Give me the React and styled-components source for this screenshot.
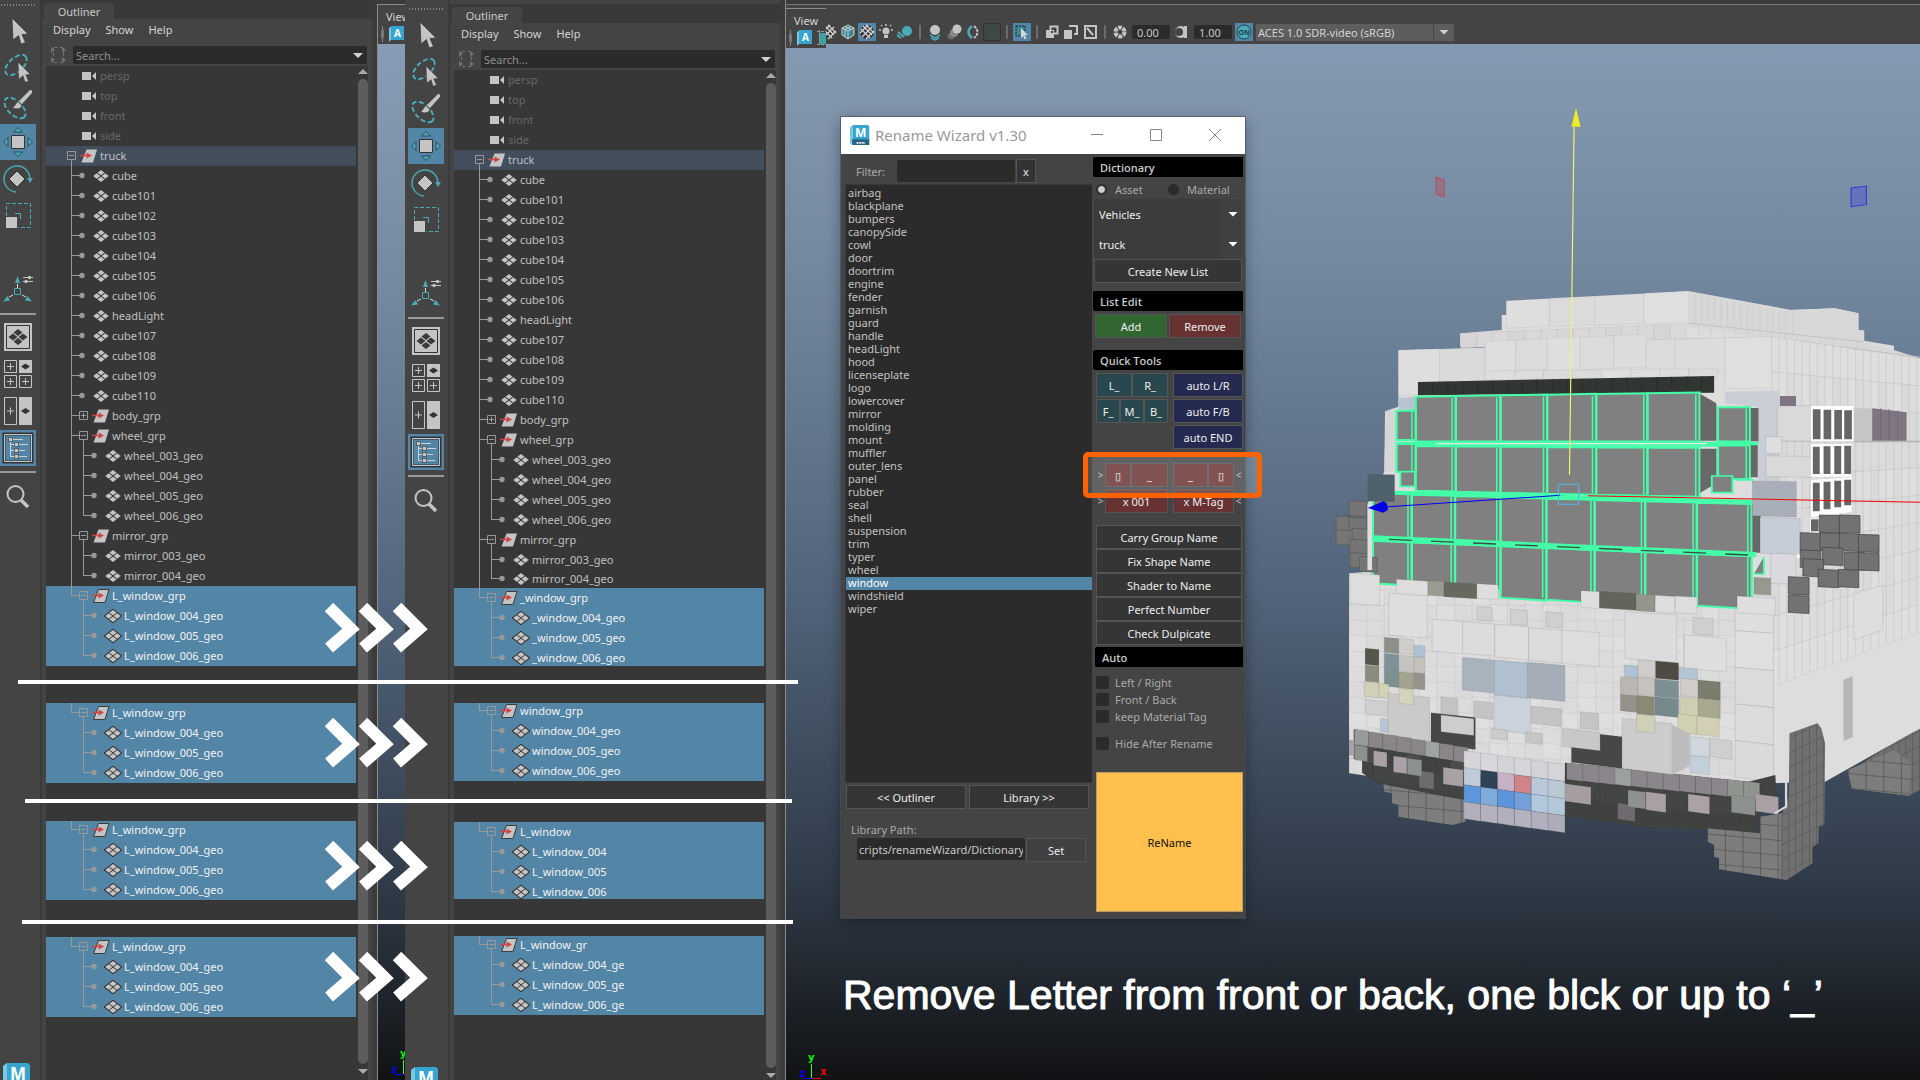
import React from "react";
import styled, { createGlobalStyle, css } from "styled-components";

const c = {
  panel: "#444444",
  dark: "#373737",
  well: "#2b2b2b",
  line: "#999999",
  select: "#5285a6",
  teal: "#49aab8",
  icon: "#c4c4c4",
  text: "#c8c8c8",
};

const Global = createGlobalStyle`
  * { box-sizing: border-box; }
  html, body { margin: 0; background: #111; }
  body, button, input, select { font-family: "Noto Sans", "Open Sans", sans-serif; font-size: 11px; }
  button, input, select { margin: 0; padding: 0; border: 0; border-radius: 0; }
  ul { list-style: none; margin: 0; padding: 0; }
`;

const Page = styled.div`
  position: relative;
  display: flex;
  height: 100vh;
  overflow: hidden;
  color: ${c.text};
  background: #3a3a3a;
`;

/* ---------- Maya shell ---------- */

const Shell = styled.div`
  flex: none;
  display: flex;
  overflow: hidden;
  width: ${(p) => p.$width}px;
  padding-left: ${(p) => p.$inset}px;
  background: ${c.panel};
`;

const ToolColumn = styled.nav`
  flex: none;
  display: flex;
  flex-direction: column;
  gap: 1px;
  width: 40px;
  padding-top: ${(p) => p.$top}px;
  background: ${c.panel};
`;

const Grip = styled.div`
  flex: none;
  width: 36px;
  height: 5px;
  margin: 3px 0 4px;
  background: radial-gradient(circle, #888 1px, transparent 1px) 0 0 / 3px 4px;
`;

const ToolButton = styled.button`
  flex: none;
  width: 36px;
  height: 36px;
  margin-top: ${(p) => p.$gap || 0}px;
  background: ${(p) => (p.$on ? c.select : "transparent")};
  svg { display: block; }
`;

const Rule = styled.div`
  flex: none;
  width: 36px;
  height: 2px;
  margin: 4px 0 3px;
  background: ${c.line};
`;

const Brand = styled.div`
  margin-top: auto;
  height: ${(p) => p.$height}px;
  padding-left: 3px;
  overflow: hidden;
`;

const OutlinerPanel = styled.section`
  flex: none;
  display: flex;
  flex-direction: column;
  width: 337px;
  padding-top: ${(p) => p.$top}px;
  border-left: 2px solid #3a3a3a;
  border-right: 5px solid #3b3b3b;
  background: ${c.panel};
`;

const TabStrip = styled.div`
  flex: none;
  height: 19px;
  padding: 3px 0 0 2px;
  background: #393939;
`;

const Tab = styled.button`
  display: block;
  width: 70px;
  height: 16px;
  color: ${c.text};
  line-height: 17px;
  border-radius: 2px 2px 0 0;
  background: ${c.panel};
`;

const MenuBar = styled.div`
  flex: none;
  display: flex;
  gap: 15px;
  height: 27px;
  padding: 3px 0 0 11px;
  button { height: 16px; color: #d4d4d4; line-height: 16px; background: none; }
`;

const SearchRow = styled.label`
  flex: none;
  display: flex;
  align-items: center;
  gap: 7px;
  height: 18px;
  margin: 0 5px 2px 9px;
`;

const SearchBox = styled.div`
  flex: 1;
  display: flex;
  align-items: center;
  height: 18px;
  padding: 1px 4px 0 3px;
  border-radius: 2px;
  background: ${c.well};
  input {
    flex: 1;
    min-width: 0;
    color: #999;
    background: transparent;
    &::placeholder { color: #8f8f8f; }
  }
`;

const Triangle = styled.span`
  flex: none;
  width: 10px;
  height: 5px;
  background: ${(p) => p.$tone || "#d0d0d0"};
  clip-path: ${(p) => (p.$up ? "polygon(50% 0, 100% 100%, 0 100%)" : "polygon(0 0, 100% 0, 50% 100%)")};
  pointer-events: none;
`;

const TreeArea = styled.div`
  flex: 1;
  display: flex;
  min-height: 0;
  margin: 0 4px 0 4px;
  background: ${c.dark};
`;

const Tree = styled.div`
  flex: 1;
  min-width: 0;
  overflow: hidden;
`;

const Scroll = styled.div`
  flex: none;
  display: flex;
  flex-direction: column;
  align-items: center;
  gap: 5px;
  width: 10px;
  margin-left: 2px;
  padding: 3px 0 ${(p) => p.$bottom}px;
`;

const Thumb = styled.div`
  flex: 1;
  width: 10px;
  border-radius: 5px;
  background: #5d5d5d;
`;

const Block = styled.div`
  height: ${(p) => p.$height}px;
  margin-top: ${(p) => p.$gap}px;
  overflow: hidden;
  display: flex;
  flex-direction: column;
  justify-content: ${(p) => (p.$trimTop ? "flex-end" : "flex-start")};
`;

const Row = styled.div`
  flex: none;
  display: flex;
  align-items: center;
  height: ${(p) => (p.$short ? 18 : 20)}px;
  color: ${(p) => (p.$picked ? "#f2f2f2" : p.$dim ? "#686868" : "#c0c0c0")};
  background: ${(p) => (p.$picked ? c.select : p.$tint ? "#424e5c" : "transparent")};
  svg { flex: none; display: block; }
  span { margin-left: 3px; line-height: 20px; white-space: nowrap; }
`;

/* ---------- tree data ---------- */

const mesh = (name, level = 1, extra = {}) => ({ name, level, kind: "mesh", ...extra });
const group = (name, level = 1, extra = {}) => ({ name, level, kind: "group", open: true, ...extra });

const mainRows = [
  ...["persp", "top", "front", "side"].map((name) => ({ name, level: 0, kind: "camera", dim: true })),
  group("truck", 0, { tint: true }),
  ...["cube", "cube101", "cube102", "cube103", "cube104", "cube105", "cube106", "headLight", "cube107", "cube108", "cube109", "cube110"].map((n) => mesh(n)),
  group("body_grp", 1, { open: false }),
  group("wheel_grp"),
  mesh("wheel_003_geo", 2),
  mesh("wheel_004_geo", 2),
  mesh("wheel_005_geo", 2),
  mesh("wheel_006_geo", 2, { last: true }),
  group("mirror_grp"),
  mesh("mirror_003_geo", 2),
  mesh("mirror_004_geo", 2, { last: true }),
];

const windowRows = (head, tails) => [
  group(head, 1, { last: true, picked: true }),
  ...tails.map((n, i) => mesh(n, 2, { picked: true, last: i === 2, rootEnded: true })),
];

const before = windowRows("L_window_grp", ["L_window_004_geo", "L_window_005_geo", "L_window_006_geo"]);

const leftBlocks = [
  { rows: before, height: 80, gap: 0 },
  { rows: before, height: 80, gap: 37 },
  { rows: before, height: 79, gap: 38, trimTop: true },
  { rows: before, height: 80, gap: 37 },
];

const rightBlocks = [
  { rows: windowRows("_window_grp", ["_window_004_geo", "_window_005_geo", "_window_006_geo"]), height: 78, gap: 0 },
  { rows: windowRows("window_grp", ["window_004_geo", "window_005_geo", "window_006_geo"]), height: 78, gap: 37, trimTop: true },
  { rows: windowRows("L_window", ["L_window_004", "L_window_005", "L_window_006"]), height: 77, gap: 41 },
  { rows: windowRows("L_window_gr", ["L_window_004_ge", "L_window_005_ge", "L_window_006_ge"]), height: 79, gap: 37, trimTop: true },
];

function Guides({ row }) {
  const { level, kind, open, last, rootEnded } = row;
  const x = 13 + 12 * level;
  const parts = [];
  if (level === 1) parts.push(`M25.5 0V${last ? 10 : 20}`);
  if (level === 2) {
    if (!rootEnded) parts.push("M25.5 0V20");
    parts.push(`M37.5 0V${last ? 10 : 20}`);
  }
  if (level > 0) parts.push(`M${x}.5 9.5H${kind === "group" ? x + 8 : x + 11}`);
  if (kind === "group") {
    const b = 21 + 12 * level;
    parts.push(`M${b}.5 5.5h8v8h-8z M${b + 2} 9.5h5`);
    if (!open) parts.push(`M${b + 4}.5 7v5`);
    if (open) parts.push(`M${b + 4}.5 14V20`);
  }
  return (
    <svg width={35 + 12 * level} height="20" fill="none" stroke="#999">
      <path d={parts.join("")} />
      {kind === "mesh" && <circle cx={x + 11} cy="9.5" r="2.7" fill="#999" stroke="none" />}
    </svg>
  );
}

function NodeIcon({ kind, picked }) {
  if (kind === "camera")
    return (
      <svg width="16" height="16" fill={c.icon}>
        <path d="M1 4h9v8H1zM11 8l4-4v8z" />
      </svg>
    );
  if (kind === "group")
    return (
      <svg width="16" height="16" overflow="visible">
        <path d="M5.500 1.500h10.500l-4 13H.500z" fill={c.icon} stroke={picked ? "#3c3c3c" : "none"} />
        <path d="M-1 7.500h8" stroke="#d04646" strokeWidth="1.500" />
        <path d="M5.500 4.500l5.500 3-5.500 3z" fill="#d04646" />
      </svg>
    );
  return (
    <svg width="16" height="16" overflow="visible">
      {picked && <path d="M8 1.200L17 8 8 14.800-1 8z" fill="#444" stroke="#333" />}
      <path d="M8 2l3.600 2.700L8 7.300 4.400 4.700zM8 8.700l3.600 2.600L8 14l-3.600-2.700zM3.800 5.300L7.300 8l-3.500 2.700L.200 8zM12.200 5.300L15.800 8l-3.600 2.700L8.700 8z" fill={c.icon} />
    </svg>
  );
}

function TreeRow({ row, short }) {
  return (
    <Row $picked={row.picked} $dim={row.dim} $tint={row.tint} $short={short} role="treeitem" aria-selected={!!row.picked}>
      <Guides row={row} />
      <NodeIcon kind={row.kind} picked={row.picked} />
      <span>{row.name}</span>
    </Row>
  );
}

/* ---------- tool icons ---------- */

const Pointer = ({ x = 12, y = 5, s = 1 }) => (
  <path transform={`translate(${x} ${y}) scale(${s})`} d="M0 0L16 16 10 16.500 13.500 24.500 9 26 6.500 17.500 1 22z" fill={c.icon} stroke="#333" strokeWidth=".7" />
);

const T = ({ children }) => (
  <svg width="36" height="36" fill="none">
    {children}
  </svg>
);

const tools = {
  select: <T><Pointer /></T>,
  lasso: (
    <T>
      <ellipse cx="16" cy="15" rx="13" ry="7" transform="rotate(-42 16 15)" stroke={c.teal} strokeWidth="2" strokeDasharray="5 2.500" />
      <Pointer x={18} y={12} s={0.78} />
    </T>
  ),
  paint: (
    <T>
      <ellipse cx="15" cy="21" rx="13" ry="7" transform="rotate(44 15 21)" stroke={c.teal} strokeWidth="2" strokeDasharray="5 2.500" />
      <path d="M32 3.500l-2-.500L19 14l3 3L32 6z" fill={c.icon} />
      <path d="M18 14.500l4 4c-1 4-6 4-10 2.500 3-1 3-5 6-6.500z" fill={c.icon} stroke="#444" />
    </T>
  ),
  move: (
    <T>
      <path d="M11.500 11.500h13v13h-13z" fill={c.icon} stroke="#333" />
      <path d="M18 3.500l4.500 4.500h-9zM18 32.500l4.500-4.500h-9zM3.500 18l4.500-4.500v9zM32.500 18l-4.500-4.500v9z" fill={c.teal} stroke="#2d4c5c" />
    </T>
  ),
  rotate: (
    <T>
      <path d="M17 10l8 8-8 8-8-8z" fill={c.icon} stroke="#333" />
      <path d="M16 31A13 13 0 1 1 30 18" stroke={c.teal} strokeWidth="1.500" />
      <path d="M27 17h6l-3 5z" fill={c.teal} />
    </T>
  ),
  scale: (
    <T>
      <path d="M6.500 18V5.500h24v24H18" stroke={c.teal} strokeDasharray="4 2" />
      <path d="M15 15.500h5.500V21" stroke={c.teal} />
      <path d="M6 19h11v11H6z" fill={c.icon} />
    </T>
  ),
  axis: (
    <T>
      <path d="M17.500 12v4M13 23l-4 2M22 23l4 2" stroke="#ddd" />
      <path d="M14.500 16.500h6v6h-6z" stroke={c.teal} />
      <path d="M15 11l2.500-7 2.500 7zM3 29.500l4.500-5.500 2.500 4.500zM32 29.500l-4.500-5.500-2.500 4.500z" fill={c.teal} />
      <path d="M23 5.500h10M23 9.500h10" stroke={c.icon} />
      <circle cx="29.500" cy="5.500" r="1.700" fill={c.icon} />
      <circle cx="26" cy="9.500" r="1.700" fill={c.icon} />
    </T>
  ),
  single: (
    <T>
      <path d="M4 4h28v28H4z" fill={c.icon} />
      <path d="M6.500 6.500h23v23h-23z" stroke="#333" />
      <path d="M18 10l4.500 3.500L18 17l-4.500-3.500zM18 19l4.500 3.500L18 26l-4.500-3.500zM13 14.500l4.500 3.500-4.500 3.500L8.500 18zM23 14.500l4.500 3.500-4.500 3.500-4.500-3.500z" fill="#3a3a3a" />
    </T>
  ),
  quad: (
    <T>
      <path d="M19 4h13v13H19z" fill={c.icon} />
      <path d="M25.500 7.500l4.500 3-4.500 3-4.500-3z" fill="#333" />
      <path d="M4.500 4.500h12v12h-12zM4.500 19.500h12v12h-12zM19.500 19.500h12v12h-12zM7 10.500h7M10.500 7v7M7 25.500h7M10.500 22v7M22 25.500h7M25.500 22v7" stroke={c.icon} />
    </T>
  ),
  split: (
    <T>
      <path d="M19 4h13v28H19z" fill={c.icon} />
      <path d="M25.500 15l4.500 3-4.500 3-4.500-3z" fill="#333" />
      <path d="M4.500 4.500h12v27h-12zM7 18h7M10.500 14.500v7" stroke={c.icon} />
    </T>
  ),
  outliner: (
    <T>
      <path d="M4 4h28v28H4z" stroke="#333" strokeWidth="3" />
      <path d="M4.500 4.500h27v27h-27z" stroke={c.icon} />
      <path d="M10.500 12v15M10.500 14.500h5M10.500 20.500h5M10.500 26.500h5M13 9.500h10M19 14.500h9M19 20.500h6M19 26.500h8" stroke="#d0d0d0" />
      <path d="M8.500 7.500h4v4h-4zM14.500 12.500h4v4h-4zM14.500 18.500h4v4h-4zM14.500 24.500h4v4h-4z" fill={c.icon} stroke="#333" strokeWidth=".6" />
    </T>
  ),
  search: (
    <T>
      <circle cx="15.500" cy="15" r="8" stroke={c.icon} strokeWidth="2" />
      <path d="M21 21l7 7" stroke={c.icon} strokeWidth="3.500" />
    </T>
  ),
};

const MayaMark = ({ size = 28 }) => (
  <svg width={size} height={size} viewBox="0 0 28 28" display="block">
    <path d="M0 3l4-3v25l-4 3z" fill="#7cc6e0" />
    <path d="M4 0h21l2 2v20H4z" fill="#36a5cf" />
    <path d="M3 20h24v8H3z" fill="#2a637d" />
    <text x="15" y="17" textAnchor="middle" fontFamily="Noto Sans, sans-serif" fontWeight="700" fontSize="17" fill="#fff">M</text>
    <path d="M9 25h12" stroke="#d6e6ee" strokeWidth="2.500" strokeDasharray="3 .7" />
  </svg>
);

function Toolbox({ top, brand }) {
  const b = (id, label, props) => (
    <ToolButton type="button" aria-label={label} {...props}>{tools[id]}</ToolButton>
  );
  return (
    <ToolColumn $top={top}>
      <Grip />
      {b("select", "Select")}
      {b("lasso", "Lasso")}
      {b("paint", "Paint select")}
      {b("move", "Move", { $on: true })}
      {b("rotate", "Rotate")}
      {b("scale", "Scale")}
      {b("axis", "Last tool", { $gap: 37 })}
      <Rule />
      {b("single", "Single view")}
      {b("quad", "Four views")}
      {b("split", "Two views")}
      {b("outliner", "Outliner layout", { $on: true })}
      <Rule />
      {b("search", "Search", { $gap: 2 })}
      <Brand $height={brand}><MayaMark /></Brand>
    </ToolColumn>
  );
}

function Outliner({ top, blocks, id, shortLast, bottom }) {
  return (
    <OutlinerPanel $top={top}>
      <TabStrip><Tab type="button">Outliner</Tab></TabStrip>
      <MenuBar>
        <button type="button">Display</button>
        <button type="button">Show</button>
        <button type="button">Help</button>
      </MenuBar>
      <SearchRow htmlFor={id}>
        <svg width="15" height="16" fill="none" stroke="#777">
          <path d="M2.500 1v14M12.500 1v14" strokeDasharray="3 2" />
          <path d="M3 .5h9M3 15.500h9" strokeDasharray="3 3" />
          <path d="M0 0l4 3-4 3zM11 0l4 3-4 3zM0 10l4 3-4 3zM11 10l4 3-4 3z" fill="#707070" stroke="none" />
        </svg>
        <SearchBox>
          <input id={id} placeholder="Search..." aria-label="Search outliner" />
          <Triangle />
        </SearchBox>
      </SearchRow>
      <TreeArea>
        <Tree role="tree">
          {mainRows.map((row, i) => (
            <TreeRow key={row.name} row={row} short={shortLast && i === mainRows.length - 1} />
          ))}
          {blocks.map((b, i) => (
            <Block key={i} $height={b.height} $gap={b.gap} $trimTop={b.trimTop}>
              {b.rows.map((row) => <TreeRow key={row.name} row={row} />)}
            </Block>
          ))}
        </Tree>
        <Scroll $bottom={bottom}>
          <Triangle $up $tone="#aaa" />
          <Thumb />
          <Triangle $tone="#aaa" />
        </Scroll>
      </TreeArea>
    </OutlinerPanel>
  );
}

/* ---------- viewport ---------- */

const sky = "linear-gradient(#899cb5 0, #7489a0 24%, #53657c 54%, #2f3a47 82%, #111214 100%)";

const Sliver = styled.div`
  flex: 1;
  display: flex;
  flex-direction: column;
  min-width: 0;
  padding-top: 4px;
  background: #3b3b3b;
`;

const SliverBody = styled.div`
  flex: 1;
  display: flex;
  align-items: flex-end;
  border-left: 1px solid #8a8a8a;
  background: ${sky};
  overflow: hidden;
`;

const CornerHead = styled.div`
  flex: none;
  height: 40px;
  width: ${(p) => (p.$wide ? "41px" : "auto")};
  padding: 5px 0 0 3px;
  border-top: 1px solid #8a8a8a;
  border-left: 1px solid #8a8a8a;
  background: ${c.panel};
  overflow: hidden;
  div { padding-left: 5px; line-height: 14px; white-space: nowrap; color: #d4d4d4; }
  svg { display: block; margin-top: 1px; }
`;

const Viewport = styled.main`
  position: relative;
  flex: 1;
  min-width: 0;
  display: flex;
  flex-direction: column;
  border-left: 1px solid #8a8a8a;
  background: ${sky};
`;

const ViewHeader = styled.header`
  flex: none;
  display: flex;
  align-items: flex-end;
  height: 44px;
  padding: 0 0 2px 34px;
  border-top: 4px solid #3a3a3a;
  box-shadow: inset 0 1px 0 #777;
  background: ${c.panel};
`;

const CornerPiece = styled.div`
  position: absolute;
  left: -1px;
  top: 8px;
`;

const ViewTools = styled.div`
  display: flex;
  align-items: center;
  gap: 1px;
  height: 20px;
`;

const ViewButton = styled.button`
  flex: none;
  width: 18px;
  height: 18px;
  background: ${(p) => (p.$on ? c.select : "transparent")};
  ${(p) => p.$boxed && css`box-shadow: inset 0 0 0 1px #333;`}
  svg { display: block; }
`;

const Divide = styled.i`
  flex: none;
  width: 2px;
  height: 14px;
  margin: 0 4px;
  background: #6c6c6c;
`;

const NumberBox = styled.input`
  width: 38px;
  height: 14px;
  margin: 0 2px !important;
  padding-left: 5px !important;
  color: ${c.text};
  border-radius: 2px !important;
  background: ${c.well};
`;

const ColorSpace = styled.label`
  display: flex;
  align-items: center;
  width: 198px;
  height: 17px;
  margin-left: 2px;
  padding-right: 5px;
  background: linear-gradient(90deg, #5d5d5d 177px, #484848 177px, #484848 178px, #5d5d5d 178px);
  select { flex: 1; height: 17px; padding-left: 2px; appearance: none; color: #d4d4d4; background: transparent; }
`;

const Truck = styled.svg`
  position: absolute;
  right: 0;
  top: 70px;
`;

const Axis = styled.svg`
  ${(p) => (p.$float ? css`position: absolute; left: 8px; bottom: -1px;` : css`flex: none; margin-bottom: 3px; margin-left: 8px;`)}
`;

const Caption = styled.h1`
  position: absolute;
  left: 57px;
  top: 970px;
  margin: 0;
  color: #fff;
  font: 400 41px/50px "Liberation Sans", sans-serif;
  -webkit-text-stroke: 1px #fff;
  white-space: nowrap;
`;

function AxisMark({ float }) {
  return (
    <Axis $float={float} width="34" height="28" fontFamily="DejaVu Sans Mono, monospace" fontSize="11" fontWeight="700">
      <text x="14" y="8" fill="#0f0">y</text>
      <text x="5" y="24" fill="#00f">z</text>
      <text x="26" y="22" fill="#f00">x</text>
      <path d="M17.500 11v14" stroke="#3f3" />
      <path d="M9 25.500h8" stroke="#00f" />
      <path d="M18 25.500h9" stroke="#f00" />
    </Axis>
  );
}

function Corner({ wide }) {
  return (
    <CornerHead $wide={wide}>
      <div>View</div>
      <svg width="42" height="18">
        <path d="M1.500 1v16" stroke="#888" />
        <path d="M0 5h3v8H0z" fill="#777" />
        <path d="M8 3l3-2v13l-3 3z" fill="#7cc6e0" />
        <path d="M10 1h13v14H10z" fill="#36a5cf" />
        <text x="16.500" y="12" textAnchor="middle" fill="#fff" fontFamily="Noto Sans, sans-serif" fontWeight="700" fontSize="10">A</text>
        <path d="M30 4h12v11H30z" fill="#3aa0a8" />
        <path d="M28 2.500h14M28 15.500h14M30.500 1v16" stroke="#999" strokeDasharray="3 1" />
      </svg>
    </CornerHead>
  );
}

const V = ({ children }) => <svg width="18" height="18" fill="none">{children}</svg>;
const Checker = ({ r }) => (
  <V>
    <circle cx="9" cy="9" r={r} fill="#333" />
    <path d="M5 3l9 9M3 6l9 9M8 2l8 8M10 2L2 10M14 4L4 14M16 8l-8 8" stroke="#d5d5d5" strokeWidth="1.300" />
  </V>
);

const viewIcons = [
  ["Wireframe", <Checker r={6} />],
  ["Shaded", <V><path d="M9 2l6 3v7l-6 4-6-4V5z" stroke="#ccc" fill="#3a8995" /><path d="M3 5l6 3 6-3M9 8v8M6 3.500l6 3M12 3.500l-6 3v7" stroke="#ccc" /></V>],
  ["Textured", <Checker r={7} />, { $on: true }],
  ["Lights", <V><circle cx="9" cy="8" r="3.500" fill={c.icon} /><path d="M7 12h4v3H7z" fill={c.icon} /><path d="M9 1v2M2 7h2M14 7h2M4 2l1 1M14 2l-1 1" stroke={c.icon} strokeWidth="1.500" /></V>],
  ["Shadows", <V><circle cx="11" cy="8" r="5" fill={c.teal} /><path d="M2 9l6 5M1 12l4 3" stroke={c.teal} strokeWidth="2" /></V>],
  null,
  ["Ambient occlusion", <V><circle cx="9" cy="7" r="5" fill={c.icon} /><path d="M4 12l5 3 5-3M5 15l4 2 4-2" stroke={c.teal} strokeWidth="1.500" /></V>],
  ["Motion blur", <V><circle cx="6" cy="13" r="3.500" fill="#6a6a6a" /><circle cx="9" cy="10" r="4" fill="#888" /><circle cx="12" cy="6" r="4.500" fill={c.icon} /></V>],
  ["Anti-aliasing", <V><path d="M8 3Q1 9 8 15" stroke={c.teal} strokeWidth="2.500" /><path d="M10 3Q17 9 10 15" stroke={c.icon} strokeWidth="2" strokeDasharray="3 1" /></V>],
  ["Depth of field", <V><path d="M4 3h8v8H4z" fill="#34484a" /><path d="M7 7h8v8H7z" fill="#3d4a4a" /></V>, { $boxed: true }],
  null,
  ["Isolate select", <V><path d="M3 3h9v10H3z" fill="#3a8995" stroke="#222" strokeDasharray="2 1" /><path d="M8 5l7 7-3 .3 1.500 3.500-2 .5-1.200-3L8 15z" fill="#d5d5d5" /></V>, { $on: true }],
  null,
  ["Xray", <V><path d="M3 7h8v8H3z" fill={c.icon} /><path d="M7.500 3.500h7v7h-7z" stroke={c.icon} strokeWidth="2" /><path d="M8 8h2v2H8z" fill="#444" /></V>],
  ["Xray joints", <V><path d="M7 3h8v8h-3" stroke={c.icon} strokeWidth="2" /><path d="M2 7h8v9H2z" fill={c.icon} /></V>],
  ["Xray components", <V><path d="M4 3h11v12H4z" stroke={c.icon} strokeWidth="2" /><path d="M6 5l6 7" stroke={c.icon} strokeWidth="2" /></V>],
  null,
  ["Exposure", <V><circle cx="9" cy="9" r="4.500" stroke={c.icon} strokeWidth="4" strokeDasharray="3.700 1" /></V>],
];

/* ---------- voxel truck ---------- */

const HORIZON = 500;
const frontK = (x) => 1 + (0.16 * (x - 76)) / 1004;
const sideK = (x) => 1 - (0.22 * (x - 1180)) / 388;

function face(k, x, y, w, h) {
  const at = (px, py) => `${px},${(HORIZON + ((py - HORIZON) * k(px)) / k(x)).toFixed(1)}`;
  return [at(x, y), at(x + w, y), at(x + w, y + h), at(x, y + h)].join(" ");
}

const shades = ["#dedede", "#dbdbdb", "#dcdcdd", "#dfdfdf", "#dadada"];
const shade = (i, j) => shades[(i * 7 + j * 5 + ((i * j) % 3)) % 5];

const F = ({ d, fill, k = frontK, edge = "rgba(70,70,70,.18)" }) => (
  <polygon points={face(k, ...d)} fill={fill} stroke={edge} strokeWidth="2" />
);

const roof = [];
[[487, 92, 112, 82], [600, 85, 120, 84], [718, 78, 128, 88], [846, 70, 118, 92]].forEach(([x, y, w, h], i) => roof.push([x, y, w, h, shades[i]]));
for (let i = 0; i < 14; i++) roof.push([368 + i * 42, 190 - i * 2, 42, 44, i % 3 ? "#dbd8db" : "#d8d5d8"]);
[[205, 241, 108, 134], [313, 237, 118, 120], [432, 214, 80, 92], [512, 209, 82, 92], [594, 205, 86, 98], [680, 201, 88, 98], [768, 196, 84, 98], [852, 210, 76, 92], [928, 208, 130, 100], [1058, 204, 122, 152]].forEach(([x, y, w, h], i) => roof.push([x, y, w, h, shade(i, 2)]));
for (let i = 0; i < 8; i++) roof.push([432 + i * 76, 304 - i, 76, 26, shade(i, 3)]);

const frontGrid = [];
for (let r = 0; r < 13; r++) for (let i = 0; i < 22; i++) frontGrid.push([76 + i * 46, 912 + r * 46, 46, 46, shade(r, i)]);

const sideGrid = [];
for (let r = 0; r < 10; r++)
  for (let i = 0; i < 20; i++) {
    const x = 1180 + i * 20;
    const y0 = 200 + r * 105;
    sideGrid.push([x, HORIZON + (y0 - HORIZON) * sideK(x), 20, 105 * sideK(x), shade(r, i)]);
  }
const cornerGrid = Array.from({ length: 5 }, (_, r) => [1085, 972 + r * 110, 100, 110, shade(r, 1)]);

const O = 930;
const details = [
  [180, 40, 100, 125, "#dedede"], [293, 118, 80, 95, "#dedede"], [372, 125, 85, 95, "#dcdcdc"], [457, 133, 88, 98, "#dedede"],
  [545, 143, 88, 98, "#dbdbdb"], [632, 150, 98, 100, "#dddddd"], [797, 95, 135, 140, "#dcdcdc"], [952, 165, 110, 100, "#dedede"],
  [410, 80, 40, 40, "#d0cfcf"], [498, 88, 44, 45, "#d2d1d1"], [590, 95, 44, 45, "#cfcfcf"], [975, 112, 52, 50, "#d0cfcf"],
  [372, 232, 84, 98, "#a9b3be"], [456, 240, 86, 104, "#b1c0cf"], [542, 247, 98, 106, "#a4adb8"], [455, 345, 95, 105, "#cad2db"],
  [168, 172, 38, 45, "#8d8f8b"], [206, 175, 40, 45, "#cfcdcb"], [118, 205, 36, 48, "#56564c"], [246, 195, 28, 35, "#afc1d4"],
  [168, 220, 38, 50, "#7c9296"], [206, 225, 40, 48, "#c6c4c0"], [246, 230, 28, 48, "#c4c1bd"], [118, 255, 36, 48, "#8a8d7b"],
  [168, 270, 38, 48, "#7c9090"], [206, 275, 38, 48, "#a3a38e"], [244, 278, 30, 48, "#96938c"], [116, 305, 38, 44, "#d1d0b6"],
  [154, 310, 26, 42, "#d3d2b4"], [178, 340, 108, 140, "#cacaca"], [206, 325, 38, 45, "#d3d4b9"],
  [795, 255, 36, 35, "#afc1d4"], [937, 262, 50, 34, "#b6c5d4"], [831, 240, 45, 50, "#cfcdcb"], [877, 243, 60, 52, "#4f4a43"],
  [785, 290, 46, 50, "#bab7b0"], [831, 292, 44, 52, "#c6c3bf"], [875, 297, 62, 52, "#7c9093"], [785, 342, 46, 50, "#94918a"],
  [829, 346, 45, 55, "#898a75"], [875, 350, 62, 55, "#76898c"], [942, 295, 46, 52, "#cfccc9"], [988, 300, 58, 55, "#7a7c6c"],
  [940, 350, 48, 55, "#cfceb5"], [988, 355, 58, 55, "#a8a88f"], [935, 402, 50, 55, "#d0d0b2"], [985, 408, 58, 55, "#d1d0b4"],
  [290, 398, 116, 94, "#474747"], [657, 453, 132, 94, "#474747"], [827, 402, 48, 52, "#cfd0b5"],
  [118, 358, 58, 44, "#d0cfcf"], [316, 350, 44, 50, "#c4c3c3"], [402, 362, 50, 50, "#c5c4c4"], [316, 405, 86, 50, "#cecdcd"],
  [552, 378, 80, 52, "#c3c3c3"], [680, 395, 48, 50, "#c6c5c5"], [632, 445, 100, 54, "#c9c8c8"], [448, 445, 42, 30, "#cccccc"],
  [538, 455, 42, 32, "#c6c6c6"], [968, 470, 50, 55, "#cfd6dd"], [1018, 475, 58, 55, "#d0cfcf"], [968, 527, 50, 50, "#c3cfdb"],
  [158, 415, 20, 40, "#b8c5d4"],
];

const bumper = [];
for (let i = 0; i < 8; i++) bumper.push([90 + i * 37, 448 + i * 7, 37, 46, i === 0 ? "#979a97" : i === 5 ? "#9ea49f" : "#898589"]);
for (let i = 0; i < 7; i++) bumper.push([112 + i * 38, 500 + i * 7, 38, 46, i % 3 === 0 ? "#4a4d49" : "#40433f"]);
for (let i = 0; i < 6; i++) bumper.push([142 + i * 39, 551 + i * 7, 39, 50, i === 3 ? "#6f6a70" : "#434642"]);
for (let i = 0; i < 12; i++) bumper.push([645 + i * 42, 548 + i * 5, 42, 50, i === 3 ? "#9ca19d" : i > 9 ? "#8f948f" : "#8b868b"]);
for (let i = 0; i < 11; i++) bumper.push([640 + i * 46, 600 + i * 6, 46, 54, "#434642"]);
for (let i = 0; i < 11; i++) bumper.push([640 + i * 46, 654 + i * 5, 46, 48, i === 3 ? "#6f6a70" : "#3f423e"]);
bumper.push(
  [76, 480, 14, 45, "#aaa2a8"], [90, 495, 34, 44, "#8d918d"], [140, 512, 35, 44, "#aaa2a8"], [192, 528, 35, 48, "#aaa2a8"], [228, 535, 38, 48, "#8d918d"], [322, 562, 52, 50, "#a9a1a6"],
  [632, 610, 76, 52, "#a59da2"], [805, 630, 46, 50, "#8e928e"], [852, 635, 52, 54, "#a8a0a5"], [962, 642, 56, 52, "#aaa2a7"], [1075, 645, 62, 52, "#8e928e"], [1138, 642, 60, 52, "#a8a0a5"]
);

const plate = [
  ["#d6d5da", "#d8d7dc", "#d4d3d8", "#d6d5da", "#d3d2d8", "#d5d4d9"],
  ["#bfcbd8", "#2d4353", "#c6b2c4", "#cf8489", "#b8c9da", "#bac8d4"],
  ["#5d96da", "#7fabdb", "#5b94d9", "#73a0d8", "#b1c8dd", "#b4c8da"],
  ["#b1afbc", "#b3b1be", "#b1afbc", "#b4b2bf", "#b1afbc", "#aeacb9"],
].flatMap((cols, r) => cols.map((col, i) => [376 + i * 44, 512 + r * 51 + i * 7, 44, 51, col]));

const cubesR = [[1305, 735], [1357, 735], [1255, 788], [1307, 788], [1357, 790], [1407, 793], [1255, 840], [1370, 846], [1407, 848], [1313, 832], [1262, 866], [1302, 898], [1354, 898], [1224, 920], [1224, 975]];
const cubesL = [[76, 693], [42, 738], [76, 742], [42, 780], [84, 775], [78, 808], [78, 848], [103, 860]];

const glassTop = [250, 355, 472, 594, 722, 856, 992];
const glassLow = [138, 240, 353, 472, 592, 718, 850, 985, 1128];

const glass = [];
for (let i = 0; i < 6; i++) {
  const x = glassTop[i];
  const w = glassTop[i + 1] - x;
  glass.push([x, 380 - i * 2, w, 134 + i * 2], [x, 528 + i, w, 134 + i * 2]);
}
for (let i = 0; i < 8; i++) {
  const x = glassLow[i];
  const w = glassLow[i + 1] - x;
  const y = 670 + i * 4;
  glass.push([x, y, w, 132 + i * 3], [x, y + 140 + i * 2, w, i < 3 ? 130 : 155]);
}
glass.push([200, 422, 50, 88], [200, 522, 50, 84], [1040, 412, 84, 102], [1040, 526, 84, 100]);

function TruckScene() {
  return (
    <Truck width="600" height="820" viewBox="0 -600 1568 2460" preserveAspectRatio="none" aria-label="Voxel truck">
      <defs>
        <pattern id="brickFront" width="46" height="44" patternUnits="userSpaceOnUse" patternTransform="skewY(6)">
          <rect width="46" height="44" fill="#7d7d7d" />
          <path d="M0 1h46M1 0v44" stroke="#4c4c4c" strokeWidth="2" />
        </pattern>
        <pattern id="brickSide" width="18" height="44" patternUnits="userSpaceOnUse" patternTransform="skewY(-30)">
          <rect width="18" height="44" fill="#707070" />
          <path d="M0 1h18M1 0v44" stroke="#555" strokeWidth="2" />
        </pattern>
      </defs>

      <polygon points="1380,1510 1545,1380 1545,1275 1568,1260 1568,1560 1540,1577 1390,1556" fill="url(#brickSide)" />
      <polygon points="1380,1500 1500,1440 1545,1480 1540,1577 1390,1556" fill="url(#brickFront)" />
      <polygon points="165,1535 380,1560 380,1655 345,1665 205,1640 205,1605 188,1600 188,1570 168,1565" fill="url(#brickFront)" />

      <polygon points="170,424 205,410 205,240 430,235 430,220 366,230 366,190 475,180 475,135 487,135 487,95 850,72 960,63 1230,120 1345,115 1407,130 1407,180 1422,182 1422,212 1500,227 1500,255 1568,265 1568,1376 1545,1390 1320,1535 1160,1540 640,1490 76,1380 76,910 125,905 125,700 168,605" fill="#dddddd" />
      <polygon points="960,63 1230,120 1345,115 1407,130 1407,180 1422,182 1422,212 1568,265 1568,300 1180,205 960,170" fill="#d8d8d8" />
      {Array.from({ length: 16 }, (_, i) => (
        <path key={i} d={`M${980 + i * 17} ${72 + i * 4}v${90 - i * 2}`} stroke="#cacaca" strokeWidth="2" />
      ))}
      <path d="M965 160L1420 215M880 208L1180 203L1568 262" stroke="#c3c3c3" strokeWidth="3" fill="none" />
      {Array.from({ length: 14 }, (_, i) => (
        <path key={i} d={`M${990 + i * 32} ${160 + i * 4}v40`} stroke="#cbcbcb" strokeWidth="2" />
      ))}

      {sideGrid.map(([x, y, w, h, f], i) => <F key={i} d={[x, y, w, h]} fill={f} k={sideK} edge="rgba(70,70,70,.09)" />)}
      {roof.map(([x, y, w, h, f], i) => <F key={i} d={[x, y, w, h]} fill={f} edge="rgba(70,70,70,.1)" />)}
      {frontGrid.map(([x, y, w, h, f], i) => <F key={i} d={[x, y, w, h]} fill={f} edge="rgba(70,70,70,.07)" />)}
      {cornerGrid.map(([x, y, w, h, f], i) => <F key={i} d={[x, y, w, h]} fill={f} edge="rgba(70,70,70,.18)" />)}

      <polygon points="256,336 1030,318 1030,368 256,376" fill="#313633" />
      {Array.from({ length: 19 }, (_, i) => <path key={i} d={`M${295 + i * 39} ${336 - i}v38`} stroke="#252a28" strokeWidth="2" />)}
      <polygon points="205,384 250,380 250,420 205,418" fill="#b9c4d1" />
      <polygon points="172,424 200,420 200,605 168,605" fill="#d6d6d6" />
      <polygon points="1058,366 1200,362 1200,640 1145,640 1145,410 1058,400" fill="#c9cdd6" />

      <path d="M200 515H1145V530H200zM200 662L1150 690V700L137 675z" fill="#43ffa8" />
      {glass.map(([x, y, w, h], i) => (
        <g key={i}>
          <polygon points={face(frontK, x, y, w, h)} fill="#808080" stroke="#43ffa8" strokeWidth="6" />
          <path d={`M${x + w - 10} ${y + 4}v${h - 4}`} stroke="#43ffa8" strokeWidth="4" />
        </g>
      ))}
      <path d="M994 372L1036 400V512H994zM994 536H1036V640L994 668zM1126 414h20v100h-20zM1126 526h18v96h-18zM1130 704h22v144h-22z" fill="#686868" />
      <path d="M138 796L1140 846V862L130 815z" fill="#43ffa8" />
      <path d="M180 808L1140 856" stroke="#3c4c45" strokeWidth="4" strokeDasharray="60 50" />
      <path d="M304 521H1010" stroke="#e6e6e6" strokeWidth="4" />
      <path d="M210 605h38v44h-38zM1024 618h54v50h-54zM1086 630h50M1160 860v52h-26" fill="#808080" stroke="#43ffa8" strokeWidth="5" />

      <F d={[1130, 633, 115, 104]} fill="#a9afba" />
      <F d={[1150, 742, 105, 108]} fill="#c6cdd6" />
      <F d={[1195, 408, 90, 105]} fill="#d9d9d9" />
      <F d={[1165, 500, 42, 50]} fill="#dedede" />
      <F d={[1165, 558, 120, 62]} fill="#d9d9d9" />
      <F d={[1178, 850, 66, 90]} fill="#dadade" />
      <path d="M1283 408h112v106h-112zM1283 522h106v98h-106zM1283 630l106-8v104l-106 16zM1280 745h26v120h-60v-12h34z" fill="#fff" />
      {[1288, 1316, 1344, 1370].map((x, i) => (
        <path key={x} d={`M${x} ${418 + i}h20v${90 - i}h-20zM${x} ${530 - i}h18v${82 + i}h-18zM${x} ${638 - i * 3}h18v${86 - i * 3}h-18z`} fill="#666" />
      ))}
      <path d="M1283 748h20v36h-20z" fill="#666" />
      <path d="M1395 415h48v98h-48z" fill="#c6c6c6" />
      <path d="M1443 415l90 12v85h-90zM1202 378h42v30h-42z" fill="#7f7582" />
      <path d="M1465 415v96M1487 417v94M1510 420v92" stroke="#6b6270" strokeWidth="2" />
      <path d="M1395 515H1568" stroke="#aaa" strokeWidth="3" />
      <path d="M1368 1230l24-12v184l-24 12z" fill="#b9b4ba" />
      <F d={[1395, 970, 76, 140]} k={sideK} fill="#dedede" />

      {cubesL.map(([x, y]) => <F key={`${x}${y}`} d={[x, y, 46, 44]} fill="#757575" edge="#5a5a5a" />)}
      <path d="M124 700h12v200h-12z" fill="#dedede" />
      <F d={[125, 613, 70, 80]} fill="#4f616b" />
      {cubesR.map(([x, y]) => <F key={`${x}${y}`} d={[x, y, 54, 52]} fill="#727272" edge="#434343" />)}

      <F d={[78, 910, 78, 90]} fill="#dddddd" />
      {[[200, 928, 82, "#dddddd"], [282, 932, 42, "#9b9a92"], [324, 936, 86, "#666a5e"], [410, 941, 56, "#dddddd"]].map(([x, y, w, f]) => <F key={x} d={[x, y, w, 44]} fill={f} />)}
      {[[682, 962, 50, "#dedede"], [730, 964, 96, "#62665a"], [826, 972, 50, "#96958c"], [876, 976, 52, "#dddddd"], [928, 978, 58, "#dddddd"], [1090, 978, 100, "#dedede"], [1134, 922, 44, "#99988f"]].map(([x, y, w, f]) => <F key={x} d={[x, y, w, 50]} fill={f} />)}

      {details.map(([x, y, w, h, f], i) => <F key={i} d={[x, y + O, w, h]} fill={f} />)}
      <polygon points="88,1378 380,1436 380,1590 330,1580 145,1538 110,1508 110,1470 88,1465" fill="#40433f" />
      <polygon points="640,1478 1120,1535 1190,1515 1195,1620 1145,1630 1145,1675 1110,1682 850,1672 640,1638" fill="#40433f" />
      {bumper.map(([x, y, w, h, f], i) => <F key={i} d={[x, y + O, w, h]} fill={f} />)}
      {plate.map(([x, y, w, h, f], i) => <F key={i} d={[x, y + O, w, h]} fill={f} />)}
      <F d={[790, 415 + O, 130, 150]} fill="#cdcccd" />
      <polygon points="920,1364 966,1390 966,1488 920,1514" fill="#bcbcbe" />
      <F d={[827, 402 + O, 48, 52]} fill="#cfd0b5" />

      <polygon points="1013,1675 1150,1690 1150,1640 1210,1630 1210,1825 1220,1830 1043,1798 1043,1765 1030,1760 1030,1725 1013,1715" fill="url(#brickFront)" />
      <polygon points="1227,1390 1300,1360 1310,1375 1320,1420 1318,1665 1303,1670 1303,1720 1287,1730 1287,1780 1220,1830 1205,1825 1205,1640 1225,1580" fill="url(#brickSide)" />
      <path d="M1218 1515v95l-30 20" stroke="#d8d8d8" strokeWidth="6" fill="none" />

      <path d="M664 -430L652 614" stroke="#f4f470" strokeWidth="3" />
      <path d="M669 -486l12 56h-24z" fill="#ecec22" />
      <path d="M304 -278l20 8v50l-20-8z" fill="rgba(190,70,90,.35)" stroke="#c04858" strokeWidth="3" />
      <path d="M1388 -246l40-6v56l-40 6z" fill="rgba(60,70,220,.35)" stroke="#2f3cd8" strokeWidth="3" />
      <path d="M178 710L628 676" stroke="#0000f5" strokeWidth="3" />
      <path d="M125 714l40-20q14 4 12 26l-12 8z" fill="#0000e8" />
      <path d="M700 677L1568 697" stroke="#f00000" strokeWidth="3" />
      <path d="M623 643h53v60h-53z" fill="none" stroke="#4cb8e8" strokeWidth="3" />
    </Truck>
  );
}

/* ---------- rename wizard ---------- */

const Wizard = styled.section`
  position: absolute;
  left: 841px;
  top: 117px;
  width: 404px;
  background: ${c.panel};
  box-shadow: 0 0 0 1px rgba(70, 80, 90, .7), 0 4px 14px rgba(0, 0, 0, .35);
`;

const TitleBar = styled.header`
  display: flex;
  align-items: center;
  height: 37px;
  padding: 0 1px 2px 9px;
  color: #999;
  background: #fff;
  h2 { flex: 1; margin: 0 0 0 5px; font-size: 15px; font-weight: 400; line-height: 20px; }
  button { width: 59px; height: 35px; background: none; }
  button svg { display: block; margin: auto; }
`;

const WizardBody = styled.div`
  display: flex;
  height: 764px;
`;

const LeftSide = styled.div`
  display: flex;
  flex-direction: column;
  width: 251px;
  padding: 5px 0 0 4px;
`;

const FilterRow = styled.div`
  display: flex;
  align-items: center;
  height: 23px;
  margin-bottom: 2px;
  padding-left: 11px;
  color: #aaa;
  label { width: 41px; padding-top: 1px; }
`;

const Field = styled.input`
  width: ${(p) => p.$w}px;
  height: 22px;
  padding: 1px 2px 0 !important;
  color: ${c.text};
  border-radius: 2px !important;
  background: ${c.well};
`;

const Btn = styled.button`
  flex: ${(p) => (p.$w ? "none" : 1)};
  width: ${(p) => (p.$w ? `${p.$w}px` : "auto")};
  height: 24px;
  padding-top: 2px !important;
  color: #eee;
  line-height: 20px;
  white-space: nowrap;
  border: 1px solid #555 !important;
  background: ${(p) => p.$tone || "#353535"};
`;

const NameList = styled.ul`
  height: 599px;
  padding-top: 2px;
  border: 1px solid #383838;
  border-right: 0;
  border-radius: 2px 0 0 2px;
  background: ${c.well};
  li {
    height: 13px;
    padding: 0 2px;
    line-height: 12px;
    color: #c2c2c2;
  }
  li[aria-selected="true"] { color: #fff; background: ${c.select}; }
`;

const ButtonPair = styled.div`
  display: flex;
  gap: ${(p) => p.$gap || 0}px;
  margin: ${(p) => p.$m || 0};
`;

const PathLabel = styled.label`
  margin: 12px 0 0 6px;
  color: #aaa;
  line-height: 17px;
`;

const RightSide = styled.div`
  flex: 1;
  display: flex;
  flex-direction: column;
  padding: 3px 2px 0 1px;
`;

const Heading = styled.h3`
  flex: none;
  height: 20px;
  margin: ${(p) => p.$m || 0};
  padding-left: 7px;
  color: ${c.text};
  font-family: "Open Sans", "Noto Sans", sans-serif;
  font-size: 11px;
  font-weight: 600;
  line-height: 21px;
  border-radius: 2px 0 0 2px;
  background: #000;
`;

const Radios = styled.div`
  display: flex;
  height: 22px;
  padding-left: 4px;
  color: #aaa;
  label { display: flex; align-items: center; gap: 9px; width: 72px; padding-top: 2px; }
  input {
    appearance: none;
    width: 9px;
    height: 9px;
    border-radius: 50%;
    background: #2b2b2b;
    box-shadow: 0 0 0 1px #2b2b2b;
    &:checked { border: 1px solid #2b2b2b; background: #d0d0d0; }
  }
`;

const Picker = styled.label`
  display: flex;
  align-items: center;
  height: 30px;
  margin: 0 1px;
  padding-right: 4px;
  background: linear-gradient(90deg, #3c3c3c 127px, #404040 127px);
  select { flex: 1; height: 30px; padding-left: 5px; appearance: none; color: #eee; background: transparent; }
`;

const ToolGrid = styled.div`
  display: grid;
  grid-template-columns: 72px 70px;
  column-gap: 5px;
  row-gap: 2px;
  margin: 3px 0 0 3px;
  ${Btn} { min-width: 0; }
`;

const Strip = styled.div`
  display: flex;
  height: 24px;
  grid-column: ${(p) => p.$col || "auto"};
  margin-top: ${(p) => p.$mt || 0}px;
  gap: ${(p) => p.$gap || 0}px;
  i { width: 9px; color: #bbb; font-size: 10px; font-style: normal; line-height: 25px; text-align: center; }
`;

const Check = styled.label`
  display: flex;
  align-items: center;
  gap: 6px;
  height: 17px;
  margin: ${(p) => (p.$first ? "7px 0 0 3px" : p.$apart ? "10px 0 0 3px" : "0 0 0 3px")};
  color: #aaa;
  input { appearance: none; width: 13px; height: 13px; border-radius: 2px; background: ${c.well}; &:checked { background: ${c.select}; } }
`;

const RenameButton = styled.button`
  height: 140px;
  margin: 20px 0 0 3px !important;
  color: #111;
  border: 1px solid #b89a64 !important;
  background: #ffc04e;
`;

const names = ["airbag", "blackplane", "bumpers", "canopySide", "cowl", "door", "doortrim", "engine", "fender", "garnish", "guard", "handle", "headLight", "hood", "licenseplate", "logo", "lowercover", "mirror", "molding", "mount", "muffler", "outer_lens", "panel", "rubber", "seal", "shell", "suspension", "trim", "typer", "wheel", "window", "windshield", "wiper"];

const teal = "#29484e";
const navy = "#252a50";
const red = "#693232";

function RenameWizard() {
  return (
    <Wizard>
      <TitleBar>
        <MayaMark size={20} />
        <h2>Rename Wizard v1.30</h2>
        <button type="button" aria-label="Minimize"><svg width="12" height="12"><path d="M0 5.500h12" stroke="#888" /></svg></button>
        <button type="button" aria-label="Maximize"><svg width="12" height="12"><path d="M.5.500h11v11H.5z" stroke="#888" fill="none" /></svg></button>
        <button type="button" aria-label="Close"><svg width="12" height="12"><path d="M0 0l12 12M12 0L0 12" stroke="#888" /></svg></button>
      </TitleBar>
      <WizardBody>
        <LeftSide>
          <FilterRow>
            <label htmlFor="filter">Filter:</label>
            <Field id="filter" $w={118} />
            <ButtonPair $m="0 0 0 1px"><Btn type="button" $w={20} $tone="#333">x</Btn></ButtonPair>
          </FilterRow>
          <NameList role="listbox" aria-label="Names">
            {names.map((n) => <li key={n} role="option" aria-selected={n === "window"}>{n}</li>)}
          </NameList>
          <ButtonPair $gap={3} $m="2px 0 0 1px">
            <Btn type="button" $w={120}>&lt;&lt; Outliner</Btn>
            <Btn type="button" $w={120}>Library &gt;&gt;</Btn>
          </ButtonPair>
          <PathLabel htmlFor="path">Library Path:</PathLabel>
          <ButtonPair $gap={1} $m="0 0 0 12px">
            <Field id="path" $w={168} defaultValue="cripts/renameWizard/Dictionary" />
            <Btn type="button" $w={60} $tone="#404040">Set</Btn>
          </ButtonPair>
        </LeftSide>
        <RightSide>
          <Heading>Dictionary</Heading>
          <Radios>
            <label><input type="radio" name="kind" defaultChecked />Asset</label>
            <label><input type="radio" name="kind" />Material</label>
          </Radios>
          <Picker><select aria-label="Category"><option>Vehicles</option></select><Triangle $tone="#fff" /></Picker>
          <Picker><select aria-label="List"><option>truck</option></select><Triangle $tone="#fff" /></Picker>
          <ButtonPair $m="0 1px"><Btn type="button">Create New List</Btn></ButtonPair>
          <Heading $m="8px 0 0">List Edit</Heading>
          <ButtonPair $gap={2} $m="3px 2px 0">
            <Btn type="button" $w={72} $tone="#316631">Add</Btn>
            <Btn type="button" $w={72} $tone="#683232">Remove</Btn>
          </ButtonPair>
          <Heading $m="12px 0 0">Quick Tools</Heading>
          <ToolGrid>
            <Strip><Btn type="button" $tone={teal}>L_</Btn><Btn type="button" $tone={teal}>R_</Btn></Strip>
            <Strip><Btn type="button" $tone={navy}>auto L/R</Btn></Strip>
            <Strip><Btn type="button" $tone={teal}>F_</Btn><Btn type="button" $tone={teal}>M_</Btn><Btn type="button" $tone={teal}>B_</Btn></Strip>
            <Strip><Btn type="button" $tone={navy}>auto F/B</Btn></Strip>
            <Strip $col="2"><Btn type="button" $tone={navy}>auto END</Btn></Strip>
            <Strip $mt={12} $col="1"><i>&gt;</i><Btn type="button" $w={26} $tone={red}>▯</Btn><Btn type="button" $tone={red}>_</Btn></Strip>
            <Strip $mt={12}><Btn type="button" $tone={red}>_</Btn><Btn type="button" $w={26} $tone={red}>▯</Btn><i>&lt;</i></Strip>
            <Strip><i>&gt;</i><Btn type="button" $tone={red}>x 001</Btn></Strip>
            <Strip><Btn type="button" $tone={red}>x M-Tag</Btn><i>&lt;</i></Strip>
          </ToolGrid>
          <ButtonPair $m="12px 1px 0 3px"><Btn type="button">Carry Group Name</Btn></ButtonPair>
          {["Fix Shape Name", "Shader to Name", "Perfect Number", "Check Dulpicate"].map((t) => (
            <ButtonPair key={t} $m="0 1px 0 3px"><Btn type="button">{t}</Btn></ButtonPair>
          ))}
          <Heading $m="2px 0 0 2px">Auto</Heading>
          <Check $first><input type="checkbox" />Left / Right</Check>
          <Check><input type="checkbox" />Front / Back</Check>
          <Check><input type="checkbox" />keep Material Tag</Check>
          <Check $apart><input type="checkbox" />Hide After Rename</Check>
          <RenameButton type="button">ReName</RenameButton>
        </RightSide>
      </WizardBody>
    </Wizard>
  );
}

/* ---------- annotations ---------- */

const Highlight = styled.div`
  position: absolute;
  left: 1083px;
  top: 452px;
  width: 179px;
  height: 46px;
  border: 5px solid #ff6300;
  border-radius: 5px;
  background: rgba(255, 255, 255, .16);
  pointer-events: none;
`;

const Separator = styled.div`
  position: absolute;
  left: ${(p) => p.$from}px;
  top: ${(p) => p.$y}px;
  width: ${(p) => p.$to - p.$from}px;
  height: 4px;
  background: #fff;
`;

const Arrows = styled.svg`
  position: absolute;
  left: 324px;
  top: ${(p) => p.$y}px;
`;

export default function App() {
  return (
    <Page>
      <Global />
      <Shell $width={405} $inset={0}>
        <Toolbox top={0} brand={17} />
        <Outliner id="search-a" top={0} blocks={leftBlocks} bottom={6} />
        <Sliver>
          <Corner />
          <SliverBody><AxisMark /></SliverBody>
        </Sliver>
      </Shell>
      <Shell $width={380} $inset={3}>
        <Toolbox top={4} brand={13} />
        <Outliner id="search-b" top={4} blocks={rightBlocks} shortLast bottom={2} />
      </Shell>
      <Viewport>
        <ViewHeader>
          <ViewTools>
            {viewIcons.map((item, i) =>
              item ? (
                <ViewButton key={i} type="button" aria-label={item[0]} {...item[2]}>{item[1]}</ViewButton>
              ) : (
                <Divide key={i} />
              )
            )}
            <NumberBox aria-label="Exposure value" defaultValue="0.00" />
            <ViewButton type="button" aria-label="Gamma"><V><circle cx="8" cy="9" r="6" fill={c.icon} /><circle cx="6" cy="9" r="4" fill="#444" /><path d="M11 3h3v12h-3z" fill={c.icon} /></V></ViewButton>
            <NumberBox aria-label="Gamma value" defaultValue="1.00" />
            <ViewButton type="button" aria-label="Color management" $on>
              <V><circle cx="9" cy="9" r="7" fill={c.teal} stroke="#28464f" /><text x="9" y="12" textAnchor="middle" fontSize="7" fontWeight="700" fontFamily="Noto Sans, sans-serif" fill="#1e3a42">ON</text></V>
            </ViewButton>
            <ColorSpace><select aria-label="View transform"><option>ACES 1.0 SDR-video (sRGB)</option></select><Triangle /></ColorSpace>
          </ViewTools>
        </ViewHeader>
        <CornerPiece><Corner wide /></CornerPiece>
        <TruckScene />
        <AxisMark float />
        <Caption>Remove Letter from front or back, one blck or up to ‘_’</Caption>
      </Viewport>
      <RenameWizard />
      <Highlight />
      <Separator $from={18} $to={798} $y={680} />
      <Separator $from={25} $to={792} $y={799} />
      <Separator $from={22} $to={793} $y={920} />
      {[603, 718, 841, 952].map((y) => (
        <Arrows key={y} $y={y} width="106" height="50" fill="none" stroke="#fff" strokeWidth="12">
          <path d="M5 4L27 26 5 45M39 4l22 22-22 19M73 4l22 22-22 19" />
        </Arrows>
      ))}
    </Page>
  );
}
